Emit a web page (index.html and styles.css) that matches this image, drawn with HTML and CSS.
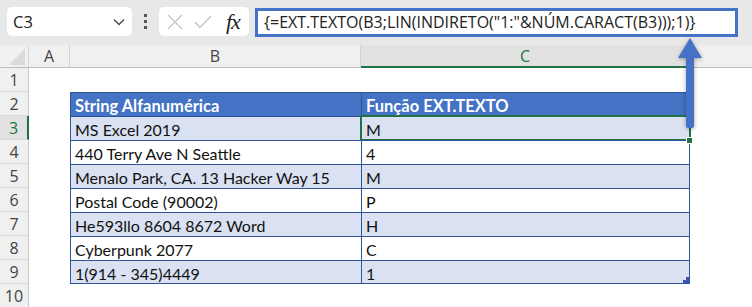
FILE: index.html
```html
<!DOCTYPE html>
<html>
<head>
    <title>EXT.TEXTO</title>
    <link rel="stylesheet" href="styles.css">
</head>
<body>

<div class="toolbar">
    <div class="namebox">
        <span>C3</span>
        <svg class="chev" width="12" height="8" viewBox="0 0 12 8"><path d="M1 1.5 L6 6.5 L11 1.5" fill="none" stroke="#444" stroke-width="1.3"/></svg>
    </div>
    <div class="dots"><i></i><i></i><i></i></div>
    <div class="fxbox">
        <svg width="16" height="16" viewBox="0 0 16 16"><path d="M1 1 L15 15 M15 1 L1 15" stroke="#c4c4c4" stroke-width="1.3"/></svg>
        <svg width="18" height="14" viewBox="0 0 18 14"><path d="M1 7 L6 12.5 L17 1" fill="none" stroke="#c4c4c4" stroke-width="1.3"/></svg>
        <span class="fx">fx</span>
    </div>
    <div class="formula">{=EXT.TEXTO(B3;LIN(INDIRETO("1:"&amp;NÚM.CARACT(B3)));1)}</div>
</div>

<div class="sheet">
    <div class="corner"><span class="tri"></span></div>
    <div class="colhead">A</div>
    <div class="colhead">B</div>
    <div class="colhead sel">C</div>
    <div class="colhead last"></div>

    <div class="rowhead">1</div><div></div><div></div><div></div><div></div>

    <div class="rowhead">2</div><div></div>
    <div class="t th">String Alfanumérica</div>
    <div class="t th c">Função EXT.TEXTO</div>
    <div></div>

    <div class="rowhead sel">3</div><div></div>
    <div class="t band">MS Excel 2019</div>
    <div class="t band c active">M<span class="handle"></span></div>
    <div></div>

    <div class="rowhead">4</div><div></div>
    <div class="t">440 Terry Ave N Seattle</div>
    <div class="t c">4</div>
    <div></div>

    <div class="rowhead">5</div><div></div>
    <div class="t band">Menalo Park, CA. 13 Hacker Way 15</div>
    <div class="t band c">M</div>
    <div></div>

    <div class="rowhead">6</div><div></div>
    <div class="t">Postal Code (90002)</div>
    <div class="t c">P</div>
    <div></div>

    <div class="rowhead">7</div><div></div>
    <div class="t band">He593llo 8604 8672 Word</div>
    <div class="t band c">H</div>
    <div></div>

    <div class="rowhead">8</div><div></div>
    <div class="t">Cyberpunk 2077</div>
    <div class="t c">C</div>
    <div></div>

    <div class="rowhead">9</div><div></div>
    <div class="t band end">1(914 - 345)4449</div>
    <div class="t band c end">1<span class="resize"></span></div>
    <div></div>

    <div class="rowhead">10</div><div></div><div></div><div></div><div></div>
</div>

<svg class="arrow" width="40" height="110" viewBox="0 0 40 110">
    <defs>
        <filter id="sh" x="-50%" y="-20%" width="200%" height="140%">
            <feDropShadow dx="0" dy="1" stdDeviation="2" flood-color="#000" flood-opacity="0.35"/>
        </filter>
    </defs>
    <path d="M20 2 L32 22 L24 22 L24 90 Q24 92 22 92 L18 92 Q16 92 16 90 L16 22 L8 22 Z" fill="#4472c4" filter="url(#sh)"/>
</svg>

</body>
</html>
```

FILE: styles.css
```css
body {
    margin: 0;
    width: 752px;
    height: 307px;
    overflow: hidden;
    position: relative;
    background: #fff;
    font-family: "Open Sans", "Noto Sans", sans-serif;
}
.toolbar {
    height: 45px;
    background: #e8e8e8;
    display: flex;
    align-items: flex-start;
    padding-top: 7px;
    box-sizing: border-box;
}
.namebox {
    margin-left: 7px;
    width: 125px;
    height: 29px;
    background: #fff;
    border-radius: 5px;
    display: flex;
    align-items: center;
    justify-content: space-between;
    padding: 0 7px 0 6px;
    box-sizing: border-box;
    font-size: 16.5px;
    color: #222;
}
.dots {
    width: 27px;
    height: 29px;
    display: flex;
    flex-direction: column;
    align-items: center;
    justify-content: center;
    gap: 3px;
}
.dots i {
    display: block;
    width: 3px;
    height: 3px;
    background: #555;
}
.fxbox {
    width: 90px;
    height: 29px;
    background: #fff;
    border-radius: 5px;
    display: flex;
    align-items: center;
    padding: 0 6px 0 8px;
    gap: 11px;
    box-sizing: border-box;
}
.fx {
    font-family: "Liberation Serif", serif;
    font-style: italic;
    font-size: 22px;
    color: #222;
    margin-left: 3px;
    letter-spacing: -1px;
}
.formula {
    margin-left: 6px;
    margin-top: 1px;
    width: 483px;
    height: 29px;
    border: 3px solid #4472c4;
    background: #fff;
    box-sizing: border-box;
    padding-left: 6px;
    font-size: 16px;
    line-height: 23px;
    color: #222;
    white-space: nowrap;
}
.sheet {
    display: grid;
    grid-template-columns: 29px 41px 291px 329px 1fr;
    grid-template-rows: 23px repeat(10, 24px);
}
.corner {
    background: #f0f0f0;
    border-right: 1px solid #d4d4d4;
    border-bottom: 1px solid #bdbdbd;
    position: relative;
}
.tri {
    position: absolute;
    right: 3px;
    bottom: 2px;
    width: 0;
    height: 0;
    border-left: 16px solid transparent;
    border-bottom: 16px solid #dadada;
}
.colhead {
    background: #f0f0f0;
    border-right: 1px solid #d4d4d4;
    border-bottom: 1px solid #bdbdbd;
    font-size: 16px;
    color: #444;
    display: flex;
    align-items: center;
    justify-content: center;
}
.colhead.sel {
    background: #e1e1e1;
    border-bottom: 2px solid #217346;
    color: #217346;
}
.colhead.last {
    border-right: none;
}
.rowhead {
    background: #f0f0f0;
    border-right: 1px solid #c8c8c8;
    border-bottom: 1px solid #dadada;
    font-size: 16px;
    color: #444;
    display: flex;
    align-items: center;
    justify-content: center;
}
.rowhead.sel {
    background: #e1e1e1;
    border-right: 2px solid #217346;
    color: #217346;
}
.t {
    border-top: 1px solid #2f5597;
    border-left: 1px solid #2f5597;
    font-family: Lato, "Open Sans", sans-serif;
    font-size: 16px;
    color: #111;
    padding: 2px 0 0 4px;
    display: flex;
    align-items: center;
    white-space: nowrap;
    position: relative;
}
.t.c {
    border-right: 1px solid #2f5597;
}
.th {
    background: #4472c4;
    color: #fff;
    font-weight: bold;
    font-size: 16.5px;
}
.band {
    background: #d9e1f2;
}
.end {
    border-bottom: 1px solid #2f5597;
}
.active {
    outline: 2px solid #217346;
    outline-offset: -1px;
}
.handle {
    position: absolute;
    right: -4px;
    bottom: -4px;
    width: 5px;
    height: 5px;
    background: #217346;
    border: 1px solid #fff;
    z-index: 2;
}
.resize {
    position: absolute;
    right: 0;
    bottom: 0;
    width: 6px;
    height: 6px;
    background: linear-gradient(to right, transparent 50%, #3f51b5 50%), linear-gradient(#3f51b5, #3f51b5);
    background-size: 6px 3px, 6px 3px;
    background-position: 0 0, 0 3px;
    background-repeat: no-repeat;
}
.arrow {
    position: absolute;
    left: 670px;
    top: 36px;
}
```
